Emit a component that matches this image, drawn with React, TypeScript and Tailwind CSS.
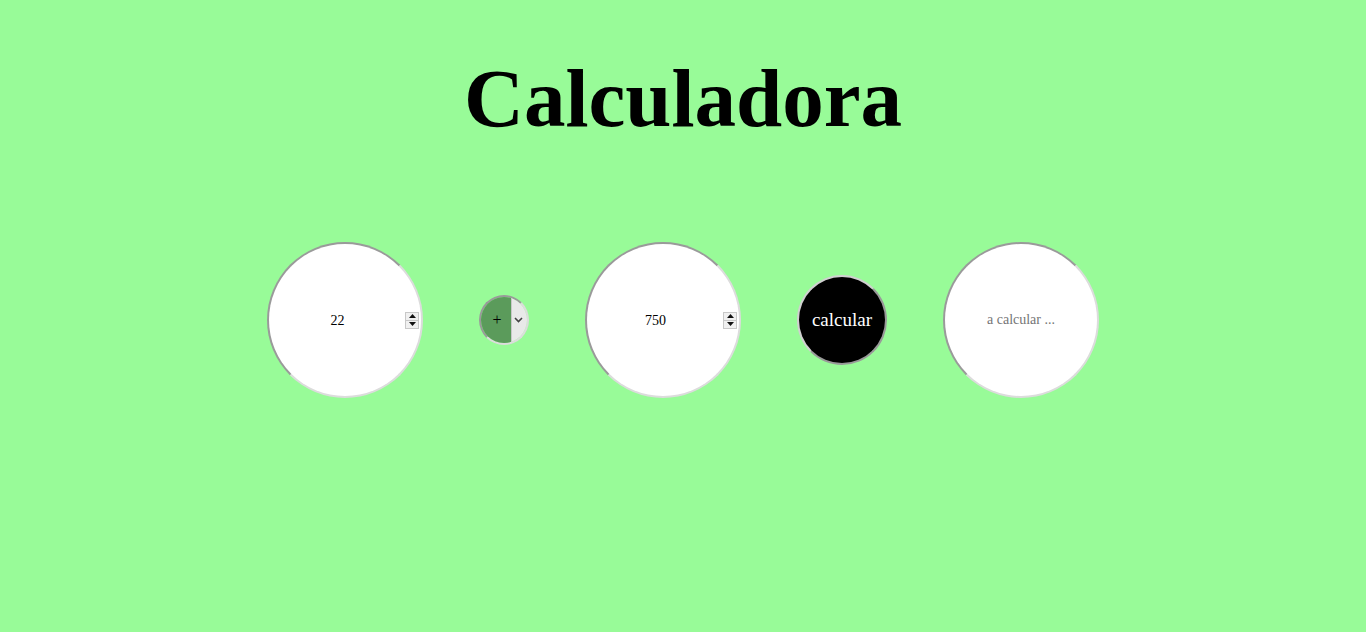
const serif = { fontFamily: '"Liberation Serif", "Times New Roman", Tinos, "DejaVu Serif", serif' };

const ring =
  "border-2 border-t-[#9a9a9a] border-l-[#9a9a9a] border-b-[#dcdcdc] border-r-[#dcdcdc]";

function Spinner() {
  return (
    <div className="w-[14px] h-[17px] flex flex-col bg-[#f0f0f0] border border-[#c8c8c8] shrink-0">
      <div className="flex-1 flex items-center justify-center border-b border-[#c8c8c8]">
        <svg width="7" height="4" viewBox="0 0 7 4">
          <path d="M0 4 L3.5 0 L7 4 Z" fill="#111" />
        </svg>
      </div>
      <div className="flex-1 flex items-center justify-center">
        <svg width="7" height="4" viewBox="0 0 7 4">
          <path d="M0 0 L3.5 4 L7 0 Z" fill="#111" />
        </svg>
      </div>
    </div>
  );
}

function NumBall({ value }: { value: string }) {
  return (
    <div className={`w-[156px] h-[156px] rounded-full bg-white flex flex-row items-center pl-[1px] pr-[2px] ${ring}`}>
      <input
        type="text"
        defaultValue={value}
        className="flex-1 min-w-0 bg-transparent text-center text-[14px] text-black outline-none"
        style={serif}
      />
      <Spinner />
    </div>
  );
}

export default function App() {
  return (
    <div className="min-h-[632px] w-full bg-[#98fb98]" style={serif}>
      <h1 className="text-center font-bold text-[83px] leading-[92px] pt-[52px] text-black" style={serif}>
        Calculadora
      </h1>
      <div className="flex flex-row items-center justify-center gap-[56px] mt-[98px]">
        <NumBall value="22" />
        <div className={`w-[50px] h-[50px] rounded-full overflow-hidden flex flex-row ${ring}`}>
          <div className="w-[30px] h-full bg-[#5b9b5b] flex items-center justify-center text-[16px] text-black pl-[2px]">+</div>
          <div className="flex-1 h-full bg-[#e9e9e9] border-l border-[#c8c8c8] flex items-center justify-start pl-[2px]">
            <svg width="9" height="6" viewBox="0 0 9 6">
              <path d="M1 1 L4.5 4.5 L8 1" fill="none" stroke="#444" strokeWidth="1.6" />
            </svg>
          </div>
        </div>
        <NumBall value="750" />
        <button className="w-[90px] h-[90px] rounded-full bg-black text-white text-[19px] border-2 border-t-[#d0d0d0] border-l-[#d0d0d0] border-b-[#999] border-r-[#999]" style={serif}>
          calcular
        </button>
        <input
          type="text"
          readOnly
          placeholder="a calcular ..."
          className={`w-[156px] h-[156px] rounded-full bg-white text-center text-[14px] placeholder:text-[#757575] outline-none px-[2px] ${ring}`}
          style={serif}
        />
      </div>
    </div>
  );
}
